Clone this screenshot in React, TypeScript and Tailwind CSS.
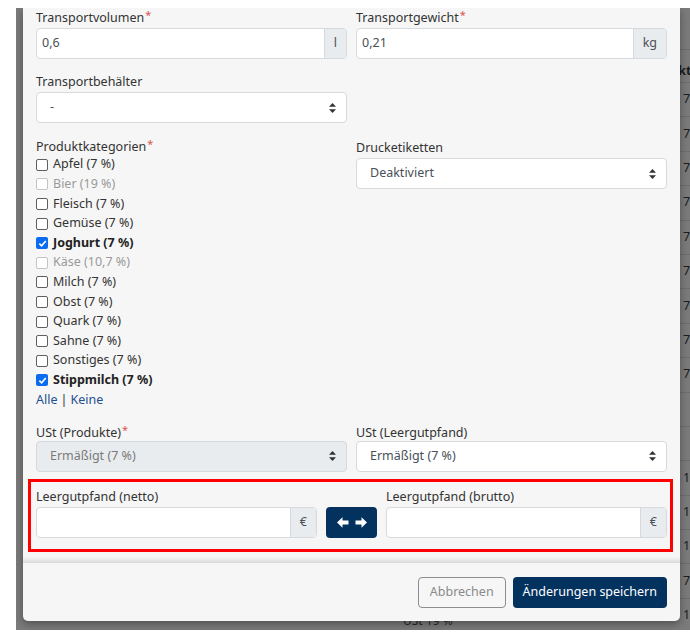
import type React from "react"

const SortIcon = () => (
  <svg width="7" height="10" viewBox="0 0 7 10" className="shrink-0">
    <path d="M3.5 0 L7 3.8 L0 3.8 Z" fill="#333" />
    <path d="M0 6.2 L7 6.2 L3.5 10 Z" fill="#333" />
  </svg>
)

const Req = () => <span className="text-[#d9534f] text-[11px] relative -top-[3px] ml-[1px]">*</span>

function Label({ children, required, tight }: { children: React.ReactNode; required?: boolean; tight?: boolean }) {
  return (
    <div className={`leading-[18px] text-[#333] ${tight ? "-mb-[1px]" : "mb-[1px]"}`}>
      {children}
      {required && <Req />}
    </div>
  )
}

function InputGroup({ value, addon }: { value?: string; addon: string }) {
  return (
    <div className="flex h-[31px] rounded-[4px] border border-[#d6d9dd] overflow-hidden bg-white">
      <div className="flex-1 flex items-center pl-[5px] text-[#495057]">{value}</div>
      <div className="flex items-center justify-center px-[9px] bg-[#e9ecef] border-l border-[#d6d9dd] text-[#495057]">
        {addon}
      </div>
    </div>
  )
}

function Select({ value, disabled }: { value: string; disabled?: boolean }) {
  return (
    <div
      className={`flex items-center h-[31px] rounded-[4px] border border-[#d6d9dd] pl-[13px] pr-[10px] ${
        disabled ? "bg-[#e9ecef] text-[#7a7a7a]" : "bg-white text-[#495057]"
      }`}
    >
      <span className="flex-1">{value}</span>
      <SortIcon />
    </div>
  )
}

function Check({ label, checked, disabled }: { label: string; checked?: boolean; disabled?: boolean }) {
  return (
    <div className={`flex items-center gap-[5px] h-[19.6px] ${disabled ? "text-[#9a9a9a]" : "text-[#333]"}`}>
      {checked ? (
        <span className="w-[12px] h-[12px] rounded-[2px] bg-[#0b6cf0] flex items-center justify-center">
          <svg width="9" height="9" viewBox="0 0 10 10">
            <path d="M1.5 5.2 L4 7.6 L8.6 2.3" fill="none" stroke="#fff" strokeWidth="1.8" />
          </svg>
        </span>
      ) : (
        <span
          className={`w-[12px] h-[12px] rounded-[2px] border bg-white ${
            disabled ? "border-[#c4c4c4]" : "border-[#5f5f5f]"
          }`}
        />
      )}
      <span className={checked ? "font-bold text-[#222]" : ""}>{label}</span>
    </div>
  )
}

const categories = [
  { label: "Apfel (7 %)" },
  { label: "Bier (19 %)", disabled: true },
  { label: "Fleisch (7 %)" },
  { label: "Gemüse (7 %)" },
  { label: "Joghurt (7 %)", checked: true },
  { label: "Käse (10,7 %)", disabled: true },
  { label: "Milch (7 %)" },
  { label: "Obst (7 %)" },
  { label: "Quark (7 %)" },
  { label: "Sahne (7 %)" },
  { label: "Sonstiges (7 %)" },
  { label: "Stippmilch (7 %)", checked: true },
]

// values of the table behind the dialog
const faktorRows = ["7", "7", "7", "7", "7", "7", "7", "7", "7", "", "", "19", "19", "19", "7", "19"]

export default function App() {
  return (
    <div className="w-[690px] h-[637px] bg-white pt-[8px] pl-[16px] pb-[7px] font-['Noto_Sans',sans-serif] text-[12.5px]">
      <div className="relative h-full bg-[#7b7b7b] overflow-hidden flex">
        {/* page behind the backdrop */}
        <div className="flex-1 flex flex-col justify-end pl-[387px] pb-[2px] text-[#262626] text-[12px] leading-[14px]">
          USt 19 %
        </div>
        <div className="w-[12px] shrink-0 flex flex-col text-[#1c1c1c]">
          <div className="h-[42px] shrink-0 border-b border-[#6e6e6e]" />
          <div className="h-[33px] shrink-0 flex items-end pb-[1px] -ml-[14px] font-bold whitespace-nowrap border-b border-[#6e6e6e]">
            Faktor
          </div>
          {faktorRows.map((v, i) => (
            <div key={i} className="h-[34.4px] flex items-center pl-[5px] border-b border-[#6e6e6e] shrink-0">
              {v}
            </div>
          ))}
        </div>

        {/* dialog */}
        <div className="absolute left-[7px] right-[10px] top-0 bottom-[9px] bg-[#f6f6f6] rounded-b-[5px] shadow-[0_3px_8px_rgba(0,0,0,0.35)] flex flex-col">
          <div className="flex-1 flex flex-col px-[13px] pt-[1px] overflow-hidden">
            <div className="grid grid-cols-2 gap-x-[9px]">
              <div className="mb-[14px]">
                <Label required>Transportvolumen</Label>
                <InputGroup value="0,6" addon="l" />
              </div>
              <div className="mb-[14px]">
                <Label required>Transportgewicht</Label>
                <InputGroup value="0,21" addon="kg" />
              </div>

              <div className="mb-[15px]">
                <Label>Transportbehälter</Label>
                <Select value="-" />
              </div>
              <div />

              <div className="mb-[14px]">
                <Label required tight>
                  Produktkategorien
                </Label>
                {categories.map((c) => (
                  <Check key={c.label} label={c.label} checked={c.checked} disabled={c.disabled} />
                ))}
                <div className="h-[19.6px] flex items-center text-[#1f4f8f]">
                  <span>Alle</span>
                  <span className="mx-[3px] text-[#333]">|</span>
                  <span>Keine</span>
                </div>
              </div>
              <div className="pt-[1px]">
                <Label>Drucketiketten</Label>
                <Select value="Deaktiviert" />
              </div>

              <div>
                <Label required tight>
                  USt (Produkte)
                </Label>
                <Select value="Ermäßigt (7 %)" disabled />
              </div>
              <div>
                <Label tight>USt (Leergutpfand)</Label>
                <Select value="Ermäßigt (7 %)" />
              </div>
            </div>

            <div className="mt-[7px] -ml-[8px] -mr-[6px] border-[3px] border-[#ff0000] pl-[5px] pr-[3px] pt-[6px] pb-[11px] flex items-end gap-[9px]">
              <div className="flex-1">
                <Label>Leergutpfand (netto)</Label>
                <InputGroup addon="€" />
              </div>
              <button
                type="button"
                className="w-[51px] h-[31px] rounded-[4px] bg-[#04325f] flex items-center justify-center gap-[6px]"
              >
                <svg width="12" height="11" viewBox="0 0 12 11">
                  <path d="M0 5.5 L5.5 0.3 L5.5 3.5 L11.5 3.5 L11.5 7.5 L5.5 7.5 L5.5 10.7 Z" fill="#fff" />
                </svg>
                <svg width="12" height="11" viewBox="0 0 12 11">
                  <path d="M12 5.5 L6.5 0.3 L6.5 3.5 L0.5 3.5 L0.5 7.5 L6.5 7.5 L6.5 10.7 Z" fill="#fff" />
                </svg>
              </button>
              <div className="flex-1">
                <Label>Leergutpfand (brutto)</Label>
                <InputGroup addon="€" />
              </div>
            </div>

            <div className="mt-auto h-[6px] -mx-[13px] bg-gradient-to-b from-[#f6f6f6] to-[#d9d9d9]" />
          </div>

          <div className="flex justify-end gap-[7px] px-[13px] pt-[14px] pb-[13px]">
            <button
              type="button"
              className="h-[31px] px-[11px] rounded-[4px] border border-[#8d8d8d] text-[#8a8a8a]"
            >
              Abbrechen
            </button>
            <button type="button" className="h-[31px] px-[10px] rounded-[4px] bg-[#04325f] text-white">
              Änderungen speichern
            </button>
          </div>
        </div>
      </div>
    </div>
  )
}
